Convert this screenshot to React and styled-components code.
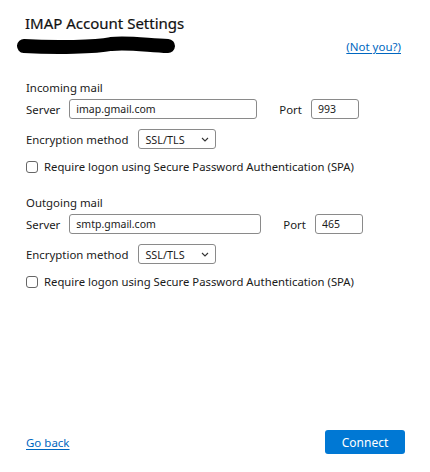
import styled, { createGlobalStyle } from 'styled-components';

const GlobalStyle = createGlobalStyle`
  html, body {
    margin: 0;
    padding: 0;
    background: #fff;
  }
  body {
    font-family: 'Noto Sans', 'Open Sans', sans-serif;
    color: #1a1a1a;
  }
`;

const MailSection = ({ title, server, port, serverWidth, top }) => (
  <SSection $top={top}>
    <SSectionTitle>{title}</SSectionTitle>
    <SRow>
      <SLabel $gap={9}>Server</SLabel>
      <SInput $width={serverWidth} defaultValue={server} />
      <SPortLabel>Port</SPortLabel>
      <SInput $width={48} defaultValue={port} />
    </SRow>
    <SRow>
      <SLabel $gap={10}>Encryption method</SLabel>
      <SSelect>
        <span>SSL/TLS</span>
        <svg width="8" height="5" viewBox="0 0 8 5">
          <path d="M1 1 L4 4 L7 1" fill="none" stroke="#333" strokeWidth="1.1" />
        </svg>
      </SSelect>
    </SRow>
    <SCheckRow>
      <SCheckbox />
      <SCheckText>Require logon using Secure Password Authentication (SPA)</SCheckText>
    </SCheckRow>
  </SSection>
);

export default function App() {
  return (
    <SPage>
      <GlobalStyle />
      <STitle>IMAP Account Settings</STitle>
      <SAccountRow>
        <svg width="160" height="20" viewBox="0 0 160 20">
          <path
            d="M8 10 C 40 12, 80 11, 95 8 C 110 6, 130 9, 152 10"
            fill="none"
            stroke="#000"
            strokeWidth="14"
            strokeLinecap="round"
          />
        </svg>
        <SLink href="#">(Not you?)</SLink>
      </SAccountRow>
      <MailSection title="Incoming mail" server="imap.gmail.com" port="993" serverWidth={188} top={24} />
      <MailSection title="Outgoing mail" server="smtp.gmail.com" port="465" serverWidth={192} top={21} />
      <SSpacer />
      <SFooter>
        <SLink href="#">Go back</SLink>
        <SButton>Connect</SButton>
      </SFooter>
    </SPage>
  );
}

const SPage = styled.div`
  width: 430px;
  height: 472px;
  box-sizing: border-box;
  padding: 12px 25px 18px 26px;
  display: flex;
  flex-direction: column;
`;

const STitle = styled.div`
  font-size: 15px;
  font-weight: 400;
  color: #111;
  line-height: 22px;
  margin-left: -1px;
  -webkit-text-stroke: 0.2px #111;
`;

const SAccountRow = styled.div`
  display: flex;
  align-items: center;
  justify-content: space-between;
  margin: 2px 4px 0 -10px;
  height: 20px;
`;

const SLink = styled.a`
  font-size: 11.5px;
  color: #0067c0;
  text-decoration: underline;
  text-underline-offset: 2px;
`;

const SSection = styled.div`
  display: flex;
  flex-direction: column;
  margin-top: ${(p) => p.$top}px;
`;

const SSectionTitle = styled.div`
  font-size: 11.4px;
  line-height: 16px;
  margin-bottom: 3px;
`;

const SRow = styled.div`
  display: flex;
  align-items: center;
  margin-bottom: 10px;
`;

const SLabel = styled.span`
  font-size: 11.4px;
  margin-right: ${(p) => p.$gap || 8}px;
`;

const SPortLabel = styled(SLabel)`
  margin-left: 22px;
  margin-right: 9px;
`;

const SInput = styled.input`
  box-sizing: border-box;
  width: ${(p) => p.$width}px;
  height: 20px;
  border: 1px solid #8a8a8a;
  border-radius: 3px;
  padding: 0 6px;
  font-family: inherit;
  font-size: 10.5px;
  color: #1a1a1a;
  outline: none;
`;

const SSelect = styled.div`
  box-sizing: border-box;
  width: 78px;
  height: 20px;
  border: 1px solid #8a8a8a;
  border-radius: 3px;
  padding: 0 6px;
  display: flex;
  align-items: center;
  justify-content: space-between;
  font-size: 10.8px;
`;

const SCheckRow = styled.label`
  display: flex;
  align-items: center;
  gap: 6px;
`;

const SCheckbox = styled.span`
  box-sizing: border-box;
  width: 12px;
  height: 12px;
  border: 1px solid #666;
  border-radius: 3px;
`;

const SCheckText = styled.span`
  font-size: 11.3px;
`;

const SSpacer = styled.div`
  flex: 1;
`;

const SFooter = styled.div`
  display: flex;
  align-items: center;
  justify-content: space-between;
`;

const SButton = styled.button`
  width: 80px;
  height: 24px;
  border: none;
  border-radius: 3px;
  background: #0078d4;
  color: #fff;
  font-family: inherit;
  font-size: 12px;
`;
